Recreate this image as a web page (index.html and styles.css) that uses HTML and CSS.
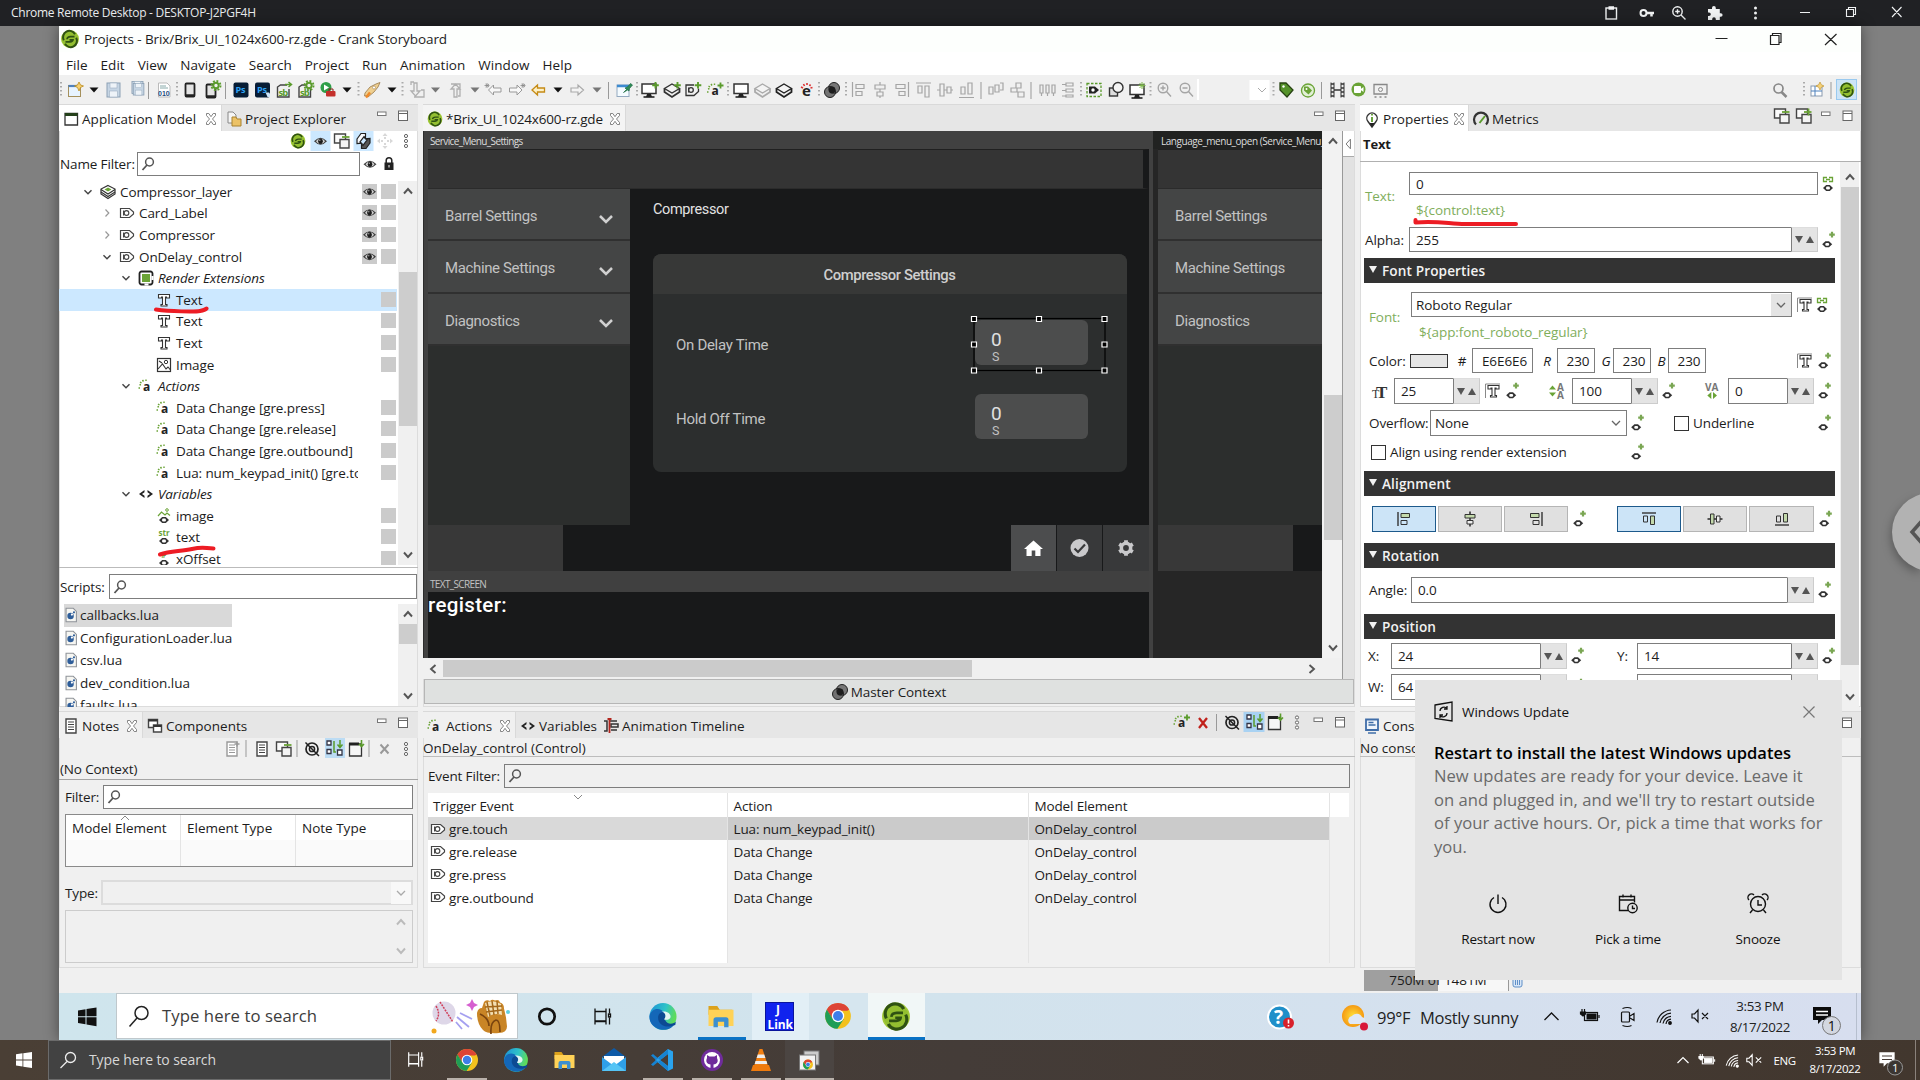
FILE: index.html
```html
<!DOCTYPE html>
<html lang="en">
<head>
<meta charset="utf-8">
<title>Chrome Remote Desktop - DESKTOP-J2PGF4H</title>
<link rel="stylesheet" href="styles.css">
</head>
<body>
<!-- Icon sprite: every glyph is centred on 0,0 -->
<svg class="sprite" aria-hidden="true">
<defs>
<linearGradient id="edgeg" x1="0" y1="0" x2="1" y2="0.3"><stop offset="0" stop-color="#1c8fd8"/><stop offset=".6" stop-color="#2fc3c8"/><stop offset="1" stop-color="#5fdc5a"/></linearGradient>
<radialGradient id="sung"><stop offset="0" stop-color="#ffe03a"/><stop offset="1" stop-color="#f59a13"/></radialGradient>
<g id="crank"><circle r="9" fill="#a3c93a"/><circle r="8" fill="#93bf30"/><g fill="none" stroke="#2f5212"><path d="M5-4.800A6.300 6.300 0 0 0-6.200 1.200" stroke-width="2"/><path d="M-5 4.800A6.300 6.300 0 0 0 6.200-1.200" stroke-width="2"/><path d="M4.500-2.300H.5Q-2.800-2.200-3 .2" stroke-width="1.700"/><path d="M-4.500 2.800H0Q2.800 2.500 3 .8H-.5" stroke-width="1.700"/></g></g>
<g id="x"><path d="M-4.500-5.500h2.300L0-2.300 2.200-5.500h2.300v2L1.500 0l3 3.500v2H2.200L0 2.300-2.200 5.500h-2.300v-2L-1.500 0l-3-3.500z" fill="#fff" stroke="#777" stroke-width=".9"/></g>
<g id="min"><rect x="-4" y="-2" width="8.500" height="3.500" fill="#fff" stroke="#777"/></g>
<g id="max"><rect x="-4.500" y="-5" width="9" height="9.500" fill="#fff" stroke="#666"/><path d="M-4.500-2.500h9" stroke="#666"/></g>
<g id="eye"><path d="M-6.500.3Q0-7 6.500.3 0 7-6.500.3z" fill="#3d3d3d"/><path d="M-4.500.3Q-3.500-1.500-1.500-2.300-3 .5-1.500 2.700-3.500 2-4.500.3zM4.500.3Q3.500-1.500 1.500-2.300 3 .5 1.500 2.700 3.500 2 4.500.3z" fill="#cfcfcf"/><circle cy=".2" r="2.200" fill="#1c1c1c"/><circle cx="-.7" cy="-.7" r=".7" fill="#aaa"/></g>
<g id="boxes"><path d="M-7.500-7H3.500v9h-11z" fill="#fbfbfb" stroke="#444" stroke-width="1.400"/><path d="M-2-1.500h9v8.500h-9z" fill="#f4f4f4" stroke="#444" stroke-width="1.400"/><path d="M0-4h7.500" stroke="#6aa336" stroke-width="1.800"/></g>
<g id="boxplus"><use href="#boxes"/><path d="M4.500-7.500v7" stroke="#6aa336" stroke-width="1.800"/></g>
<g id="swap"><path d="M-6.500-2L-2.500-7.500H2v4.500L.5-4.300-3.500 1l1.500 1.200-4.500.3z" fill="#f8fbff" stroke="#222" stroke-width="1.200"/><path d="M6.500 2L2.500 7.500H-2V3l1.500 1.300L3.500-1 2-2.200l4.500-.3z" fill="#555" stroke="#222" stroke-width="1.200"/></g>
<g id="move"><path d="M0-8l2.500 3h-5zM0 8l2.500-3h-5zM-8 0l3-2.500v5zM8 0L5-2.500v5zM-1-4h2v2h-2zM-1 2h2v2h-2zM-4-1h2v2h-2zM2-1h2v2H2z" fill="#d8d8d8"/></g>
<g id="dots"><g fill="#fff" stroke="#666"><circle cy="-5" r="1.600"/><circle r="1.600"/><circle cy="5" r="1.600"/></g></g>
<g id="lock"><rect x="-4.500" y="-1.500" width="9" height="7.500" fill="#222"/><path d="M-2.800-1v-2.500a2.800 2.800 0 0 1 5.600 0V-1" fill="none" stroke="#222" stroke-width="1.500"/><path d="M0 1v2.500" stroke="#fff"/></g>
<g id="find"><circle cx="1.500" cy="-2" r="3.900" fill="none" stroke="#555" stroke-width="1.500"/><path d="M-1 1L-5.500 6" stroke="#555" stroke-width="1.800"/></g>
<g id="open"><path d="M-3.500-1.800L0 1.800 3.500-1.800" fill="none" stroke="#444" stroke-width="1.400"/></g>
<g id="shut"><path d="M-1.500-3.500L1.800 0-1.500 3.500" fill="none" stroke="#999" stroke-width="1.200"/></g>
<g id="arrup"><path d="M-4 2.500L0-2 4 2.500" fill="none" stroke="currentColor" stroke-width="1.900"/></g>
<g id="arrdn"><path d="M-4-2.500L0 2 4-2.500" fill="none" stroke="currentColor" stroke-width="1.900"/></g>
<g id="arrl"><path d="M2.500-4L-2 0 2.500 4" fill="none" stroke="currentColor" stroke-width="1.900"/></g>
<g id="arrr"><path d="M-2.500-4L2 0-2.500 4" fill="none" stroke="currentColor" stroke-width="1.900"/></g>
<g id="layerg"><path d="M0-6.500l7 3.500v5L0 6.500-7 2v-5z" fill="#fff" stroke="#333" stroke-width="1.200"/><path d="M-7-2.500L0 2 7-2.500M-7 0l7 4.500L7 0" fill="none" stroke="#333" stroke-width="1.100"/><path d="M0-4.500l3.500 2L0-.5l-3.500-2z" fill="#6aa336"/></g>
<g id="layer"><path d="M0-6l7.500 4.500L0 3-7.500-1.500z" fill="#f4f4f4" stroke="currentColor" stroke-width="1.400"/><path d="M-7.500-1v3L0 7l7.500-5v-3" fill="none" stroke="currentColor" stroke-width="1.800"/></g>
<g id="ctl"><path d="M-6.500-4.500H2.500L6.500-1V1L2.500 4.500h-9z" fill="#fff" stroke="#444" stroke-width="1.200"/><circle cx="-.5" r="2.300" fill="none" stroke="#444" stroke-width="1.200"/><path d="M-3.500-2.500v5" stroke="#444"/></g>
<g id="render"><rect x="-6.500" y="-6.500" width="13" height="13" rx="2" fill="#fff" stroke="#222" stroke-width="1.800"/><path d="M-1.500 6.500h4M6.500-2v4" stroke="#fff" stroke-width="2.200"/><rect x="-4" y="-4" width="8" height="8" fill="#6aa336"/></g>
<g id="tee"><path d="M-5.500-5.500h11v3.500h-3v-1H1.500v7.500H3v1.500h-6V4.500h1.500V-3h-1v1h-3z" fill="#fff" stroke="#333" stroke-width="1.100"/></g>
<g id="tee2"><path d="M-7.500 7v-14H7" fill="none" stroke="#888"/><use href="#tee" x=".5"/></g>
<g id="img"><rect x="-6.500" y="-6.500" width="13" height="13" fill="#fff" stroke="#333" stroke-width="1.200"/><path d="M-6 4l4.500-5L2 4l2-2 2.500 3M-5-4l3 2" fill="none" stroke="#333" stroke-width="1.100"/><circle cx="2" cy="-3" r="1.700" fill="none" stroke="#333"/></g>
<g id="act"><text x="-3" y="5" class="ga">a</text><path d="M-6.500-1l1.500-.5M-6-4l1.500 1M-3.500-6l1 1.500M0-6.500v1.500M-7.500 2h1.500" stroke="#6aa336" stroke-width="1.400"/></g>
<g id="actp"><use href="#act"/><path d="M6-7.500v6M3-4.500h6" stroke="#5a9b2c" stroke-width="1.800"/></g>
<g id="var"><path d="M-1.500-4L-7 0l5.500 4V1.800L-4 0l2.500-1.800zM1.500-4L7 0 1.500 4V1.800L4 0 1.500-1.800z" fill="#222"/></g>
<g id="sv"><path d="M-1.800-3H1.800L5 0 1.800 3h-3.600L-5 0z" fill="#333"/><rect x="-1.900" y="-1.400" width="3.800" height="2.800" rx="1.200" fill="#fff"/></g>
<g id="vimg"><use href="#sv" y="4"/><path d="M-6 0l3.500-4L1-1l2-2 3 2.500" fill="none" stroke="#6aa336" stroke-width="1.200"/><circle cx="3" cy="-6" r="1.300" fill="none" stroke="#6aa336"/></g>
<g id="vstr"><use href="#sv" y="4"/><text x="-5.500" y="-1.500" class="gstr">str</text></g>
<g id="vnum"><use href="#sv" y="4"/><text x="-3" y="-1" class="gstr">#</text></g>
<g id="vp"><use href="#sv" x="-.8" y="4.300"/><path d="M4-8.200v5.600M1.200-5.400h5.600" stroke="#7aa653" stroke-width="2.200"/></g>
<g id="vl"><use href="#sv" y="4"/><path d="M-1-6.500h-3.500v4H-1M1-6.500h3.500v4H1M-2-4.500h4" fill="none" stroke="#6aa336" stroke-width="1.300"/></g>
<g id="lua"><path d="M-5.500-7.500h8L6-4v11.500H-5.500z" fill="#f6f6f2" stroke="#8f9399" stroke-width="1.200"/><circle cx="-.5" cy="1" r="3.600" fill="#2f5e9a"/><circle cx="1" cy="-.5" r="1.200" fill="#fff"/><circle cx="3.300" cy="-3" r="1.200" fill="#2f5e9a"/></g>
<g id="note"><path d="M-5-7H5V7H-5z" fill="#fff" stroke="currentColor" stroke-width="1.400"/><path d="M-3-4h6M-3-1.500h6M-3 1h6M-3 3.500h6" stroke="currentColor"/></g>
<g id="comp"><path d="M-6.500-6.500h9v8h-9z" fill="#fff" stroke="#444" stroke-width="1.400"/><path d="M-6.500-5.500h9" stroke="#333" stroke-width="2"/><path d="M-1.500-1h8v7h-8z" fill="#fff" stroke="#444" stroke-width="1.400"/><path d="M-1.500 0h8" stroke="#333" stroke-width="2"/></g>
<g id="noeye"><circle r="6" fill="none" stroke="#222" stroke-width="1.700"/><circle r="2.600" fill="none" stroke="#222" stroke-width="1.500"/><path d="M-6.500-6.500L7 7" stroke="#222" stroke-width="1.500" fill="none"/></g>
<g id="flow"><path d="M-7-7h4v4h-4zM-7 1.500h4v4h-4zM3.500 2h4.500v5H3.500z" fill="#fff" stroke="#334" stroke-width="1.300"/><path d="M0-7v11h2M6-8v7M3.500-3.500L6-.5l2.500-3" fill="none" stroke="#5a9b2c" stroke-width="1.500"/></g>
<g id="winp"><path d="M-6.500-5h12v12h-12z" fill="#f6f6f6" stroke="#333" stroke-width="1.300"/><path d="M-7-5H3" stroke="#222" stroke-width="3"/><path d="M5.500-9v6M3-5L5.500-2.500 8-5" fill="none" stroke="#5a9b2c" stroke-width="1.600"/></g>
<g id="mon"><path d="M-7-6H7V3.500H-7z" fill="#fff" stroke="#333" stroke-width="1.500"/><path d="M-2 4h4l1 3h-6z" fill="#222"/><path d="M-5.500 7h11" stroke="#222" stroke-width="1.600"/></g>
<g id="plus"><path d="M5.500-9v6.500M2.200-5.700h6.600" stroke="#5a9b2c" stroke-width="1.900"/></g>
<g id="ctx"><circle cx="2" cy="-2" r="5.500" fill="#777" stroke="#222"/><circle cx="-2" cy="2" r="5.500" fill="#555" fill-opacity=".8" stroke="#222"/><circle r="3.400" fill="#1d1d1d"/></g>
<g id="hl"><path d="M0-7V9" stroke="#aaa" stroke-width="2" stroke-dasharray="1.500 2.500"/></g>
<g id="sp"><path d="M0-8V9" stroke="#999" stroke-width="1"/></g>
<g id="car"><path d="M-4.500-2.500h9L0 2.500z" fill="currentColor"/></g>
<g id="al"><path d="M-6-7V7" stroke="currentColor" stroke-width="1.400"/><path d="M-3-5.500h8.500v4H-3z" fill="#c3d9ab" stroke="currentColor"/><path d="M-3 1.500h6v4h-6z" fill="none" stroke="currentColor"/></g>
<g id="ac"><path d="M0-7.500V7.500" stroke="currentColor" stroke-width="1.600"/><path d="M-5-4.500H5v3.500H-5z" fill="#c3d9ab" stroke="currentColor"/><path d="M-3 1.500h6v3.500h-6z" fill="#eee" stroke="currentColor"/></g>
<g id="fld"><path d="M-10-8h7l2 3H9v4H-10z" fill="#dca21c"/><path d="M-10-5H10V8H-10z" fill="#ffd257"/><path d="M-6 9V3q0-2 2-2h8q2 0 2 2v6H2.500V4.500h-5V9z" fill="#3c8fd0"/></g>
<g id="chr"><circle r="11" fill="#f3c11d"/><path d="M-9.530-5.500A11 11 0 0 0-.5 11L4.800 2.800 0 0-4.800 2.800z" fill="#1f9d56"/><path d="M-9.530-5.500L-4.500 3.500 0-3z" fill="#1f9d56"/><path d="M-9.530-5.500A11 11 0 0 1 9.530-5.500L8-4.500H0L-5 1.500z" fill="#dd4436"/><circle r="5.300" fill="#fff"/><circle r="4.200" fill="#3d7ee8"/></g>
<g id="edge"><circle r="11" fill="url(#edgeg)"/><path d="M-11 0C-10-7-2-8 1-3 3 0 0 2 1 4c2 3 7 3 9 1C7 11 0 12-5 9.500-9.500 7-11 4-11 0z" fill="#1467b8"/><path d="M-4 1c0-4 4-6 6-3 1 2-1 3 0 5.500C4 7 9 6 10.500 4L10 7 6 8C1 9-4 6-4 1z" fill="#0c4a93"/><path d="M.8 2.200C3 0 2-3-1-4c6-1 9 4 6 6-1 .8-3 1-4.200.2z" fill="#e3f5f3"/></g>
<g id="tv" fill="none" stroke="currentColor" stroke-width="1.300"><path d="M-7-8v3H4v-3M-7 8V5H4v3M-7-4.500V4.500H4V-4.500M7.500-8V-3M7.500 1v7"/><rect x="6.500" y="-2.500" width="2" height="3"/></g>
<g id="bat" fill="none" stroke="currentColor"><rect x="-5.500" y="-3.500" width="13" height="8" stroke-width="1.200"/><rect x="-3" y="-2" width="9" height="5" fill="currentColor"/><path d="M9-1v3M-8-7v3M-5.500-7v3M-9.500-4h5v2l-2.500 2-2.500-2z" fill="currentColor" stroke-width="1.200"/></g>
<g id="wifi" fill="none" stroke="currentColor" stroke-width="1.200"><path d="M-8 5.500A15 15 0 0 1 6-7M-5 6A12 12 0 0 1 6-3.800M-2 6.500A8.500 8.500 0 0 1 6-.7M1 7A5.500 5.500 0 0 1 6 2.200"/><circle cx="5" cy="6" r="1.300" fill="currentColor"/></g>
<g id="mute" fill="none" stroke="currentColor" stroke-width="1.200"><path d="M-8-2h2.500L-2-6V6L-5.500 2H-8zM2-3l6 6M8-3L2 3"/></g>
<g id="note1"><path d="M-9-8H9V5H0L-4 9V5h-5z" fill="currentColor"/></g>
</defs>
</svg>

<header class="crd-bar">
  <span>Chrome Remote Desktop - DESKTOP-J2PGF4H</span>
  <svg width="330" height="26" viewBox="1590 0 330 26" fill="none" stroke="#f1f3f4" stroke-width="1.400">
    <rect x="1606" y="8" width="10.500" height="11"/><path d="M1608.500 8h5.500" stroke-width="3.500"/>
    <circle cx="1643.500" cy="13" r="3" stroke-width="2"/><path d="M1646 13h8M1651.500 13v3.500" stroke-width="2.500"/>
    <circle cx="1677.500" cy="11.500" r="4.700"/><path d="M1681 15l4.500 4.500M1675.200 11.500h4.600M1677.500 9.200v4.600"/>
    <path d="M1708 9h4v-1a1.900 1.900 0 0 1 3.800 0v1h4v4.200h1a1.800 1.800 0 0 1 0 3.600h-1V20h-4v-1a1.800 1.800 0 0 0-3.600 0v1h-4.200v-4h1a1.800 1.800 0 0 0 0-3.600h-1z" fill="#f1f3f4" stroke="none"/>
    <g fill="#f1f3f4" stroke="none"><circle cx="1755.500" cy="8" r="1.500"/><circle cx="1755.500" cy="13" r="1.500"/><circle cx="1755.500" cy="18" r="1.500"/></g>
    <path d="M1800 12.500h10" stroke-width="1"/><path d="M1846.500 9.500h7v7h-7zM1848.500 9.500v-2h7v7h-2M1892 7l9.500 10M1901.500 7l-9.500 10" stroke-width="1.100"/>
  </svg>
</header>

<main class="remote">
<div class="win">
  <div class="title">
    <svg class="ic" viewBox="-10 -10 20 20"><use href="#crank"/></svg>
    <span>Projects - Brix/Brix_UI_1024x600-rz.gde - Crank Storyboard</span>
    <svg width="141" height="26" viewBox="1710 26 141 26" fill="none" stroke="#222" stroke-width="1.200"><path d="M1715.500 38.500h12M1770.500 35.500h8.500v9h-8.500zM1772.500 35.500v-2h8.500v9h-2M1825 34l11.500 11M1836.500 34l-11.500 11"/></svg>
  </div>
  <nav class="menu"><span>File</span><span>Edit</span><span>View</span><span>Navigate</span><span>Search</span><span>Project</span><span>Run</span><span>Animation</span><span>Window</span><span>Help</span></nav>
  <div class="toolbar">
  <svg width="1802" height="28" viewBox="59 75 1802 28">
    <use href="#hl" x="61" y="89"/>
    <g transform="translate(75 90)"><rect x="-6.500" y="-4.500" width="12" height="11" fill="#e7f3ff" stroke="#a5905c"/><path d="M-6.500-4H4.500" stroke="#4f81bd" stroke-width="2.200"/><path d="M4-8l1.500 3 3 1-3 1.500L4 1 2.500-2.500l-3-1.500 3-1z" fill="#f7d070" stroke="#b98a1c" stroke-width=".8"/></g>
    <use href="#car" x="94" y="90"/>
    <g id="disk" transform="translate(113.500 90)"><rect x="-6.500" y="-7" width="13" height="14" fill="#c6d5e4" stroke="#8ca0b4"/><rect x="-3.500" y="-7" width="7" height="5" fill="#eef3f8" stroke="#9db0c2" stroke-width=".6"/><rect x="-4" y="1" width="8" height="6" fill="#eef3f8" stroke="#9db0c2" stroke-width=".6"/></g>
    <use href="#disk" transform="translate(41 11) scale(.85)"/><use href="#disk" transform="translate(45.500 15.500) scale(.82)"/>
    <use href="#sp" x="148.500" y="90"/>
    <g transform="translate(164 90)"><path d="M-5.500-7H3l3 3V7h-11.500z" fill="#fff" stroke="#bbb"/><path d="M-4-4h6M-4-2h8" stroke="#8aa"/><text class="g010" x="-6" y="6">010</text></g>
    <use href="#hl" x="177" y="89"/>
    <g id="phone" transform="translate(190 90)"><rect x="-4.500" y="-6.500" width="9" height="13" rx="1" fill="#e4e4e4" stroke="#222" stroke-width="1.800"/><path d="M-4 5.500h8" stroke="#222" stroke-width="2.500"/></g>
    <use href="#phone" x="21" y="1"/><g id="ggear"><circle cx="216" cy="85.500" r="4.600" fill="none" stroke="#5a9b2c" stroke-width="1.800" stroke-dasharray="1.900 1.700"/><circle cx="216" cy="85.500" r="2.700" fill="#f0f0f0" stroke="#5a9b2c" stroke-width="2"/></g>
    <use href="#sp" x="225.500" y="90"/>
    <g id="ps"><rect x="233.500" y="82.500" width="15" height="15" rx="2" fill="#071d35"/><text class="gps" x="235.500" y="93">Ps</text></g>
    <use href="#ps" x="21.500"/><path d="M265.500 92.500h3.500l1 1v3.500h-2.500z" fill="#cfe6fa"/>
    <g id="sb"><path d="M287 85h-6.500l-3 2v10h11.500v-8" fill="none" stroke="#444" stroke-width="1.400"/><text class="gsb" x="278.500" y="95.500">sb</text></g>
    <path d="M285 84.500h6M288.500 82l3 2.500-3 2.500" stroke="#5a9b2c" stroke-width="1.500" fill="none"/>
    <use href="#sb" x="21.500"/><use href="#ggear" x="93"/>
    <circle cx="326" cy="87.500" r="5.500" fill="#2f9e48"/><path d="M324 84.500l5 3-5 3z" fill="#fff"/><rect x="326" y="91" width="9.500" height="5.500" rx="1" fill="#c4302b"/><path d="M329 91v-2h4v2" fill="none" stroke="#8a1f1b"/>
    <use href="#car" x="347" y="90"/><use href="#hl" x="358.500" y="89"/>
    <path d="M365 93l5-6 6-3 4-1.500-2 4.500-4 5-6 5-1.500-1.500-2 .5z" fill="#efcf8f" stroke="#a08358" stroke-width=".9"/><path d="M366 97.500l4-5" stroke="#f08a2a" stroke-width="2.500"/><circle cx="374" cy="87.500" r="1.500" fill="#fff" stroke="#a08358" stroke-width=".6"/>
    <use href="#car" x="392" y="90"/><use href="#hl" x="402.500" y="89"/>
    <g fill="none" stroke="#b0b0b0" stroke-width="1.300"><path d="M414 83v8h-3l4.500 5 4.500-5h-3v-8zM421 90h3v7h-10M411 85v-3h3"/><path d="M451 84h9v12h-2M454 97v-8h-3l4.500-5 4.500 5h-3v8z"/></g>
    <g color="#777"><use href="#car" x="435.500" y="90"/><use href="#car" x="475" y="90"/><use href="#car" x="597" y="90"/></g>
    <path d="M488.500 90l5-5v3h7.500v4h-7.500v3z" fill="#f8f8f8" stroke="#999"/><path d="M487 83v5M484.500 85.500h5M485.500 84l3.500 3M489 84l-3.500 3" stroke="#888" stroke-width=".8"/>
    <path d="M522 90l-5-5v3h-7.500v4h7.500v3z" fill="#f8f8f8" stroke="#999"/><path d="M523 83v5M520.500 85.500h5M521.500 84l3.500 3M525 84l-3.500 3" stroke="#888" stroke-width=".8"/>
    <path d="M532 90l5.500-5v3h7v4h-7v3z" fill="#fdf0c6" stroke="#c58b16" stroke-width="1.300"/>
    <use href="#car" x="558" y="90"/>
    <path d="M583.500 90l-5.500-5v3h-7v4h7v3z" fill="#f4f4f4" stroke="#aaa" stroke-width="1.200"/>
    <use href="#sp" x="608.500" y="90"/>
    <rect x="617" y="85" width="12" height="11.500" fill="#f4fbff" stroke="#93a9c0"/><path d="M617 86h12" stroke="#3d8bd0" stroke-width="2.500"/><path d="M623.500 92.500l3-3-1.500-1.500 2.500-1 3-3.500 2 1.500-3 3.500-.5 2.500-1.500-1z" fill="#2e8b57" stroke="#1c6b40" stroke-width=".7"/>
    <use href="#hl" x="637" y="89"/>
    <use href="#mon" x="649" y="90"/><use href="#plus" x="650" y="91"/>
    <g color="#333"><use href="#layer" x="672" y="90"/><use href="#plus" x="672" y="91"/></g>
    <path d="M694 85h-8v10.500h8l4.500-4v-3" fill="none" stroke="#333" stroke-width="1.300"/><circle cx="691" cy="90" r="2.300" fill="none" stroke="#333" stroke-width="1.300"/><path d="M688.500 87.500v5" stroke="#333"/><use href="#plus" x="692.500" y="91"/>
    <use href="#actp" x="714.500" y="90"/><use href="#hl" x="728" y="89"/>
    <use href="#mon" x="741" y="90"/>
    <g color="#aaa"><use href="#layer" x="762.500" y="90"/></g><g color="#222"><use href="#layer" x="784" y="90"/></g>
    <text class="ge" x="802" y="96">e</text><path d="M801 87l2 1M803.500 84l1 2M807 83v2M810.500 84.500l-1 1.500M812.500 87.500l-2 .5" stroke="#d33" stroke-width="1.600"/>
    <use href="#hl" x="819" y="89"/><use href="#ctx" x="832" y="90"/><use href="#hl" x="846" y="89"/>
    <g fill="none" stroke="#a5a5a5" stroke-width="1.200">
      <path d="M852.500 82v15M856 84.500h8v4h-8zM856 91.500h6v4h-6z"/>
      <path d="M880 82v3M880 89v3M880 96v2M875 85h10v4h-10zM877 92h6v4h-6z"/>
      <path d="M908.500 82v15M896 84.500h9v4h-9zM899 91.500h6v4h-6z"/>
      <path d="M916 83h15M918 86h4v7h-4zM925 86h4v11h-4z"/>
      <path d="M937 90h3M944 90h3M951 90h2M940 84h4v12h-4zM947 87h4v6h-4z"/>
      <path d="M959 97.500h15M961 87h4v7h-4zM968 83h4v11h-4z"/>
      <path d="M989 87h4v7h-4zM995 85h4v7h-4zM1000 83h3v7h-3"/>
      <path d="M1011 88h6v4h-6zM1016 83h5v5h-5zM1018 92h6v5h-6z"/>
      <path d="M1040 85h3v8h-3zM1046 85h3v8h-3zM1052 85h3v8h-3zM1041.500 93v3M1047.500 93v3M1053.500 93v3"/>
      <path d="M1066 83h7v3h-7zM1066 89h7v3h-7zM1066 95h7v2h-7zM1062 84.500h4M1062 90.500h4M1062 96h4"/>
    </g>
    <use href="#sp" x="981" y="90"/><use href="#sp" x="1031" y="90"/><use href="#hl" x="1081" y="89"/>
    <rect x="1087" y="83.500" width="14" height="13" fill="none" stroke="#5a9b2c" stroke-width="1.300" stroke-dasharray="2.500 1.500"/><path d="M1089 86.500h6l4 3.500-4 3.500h-6z" fill="#222"/><circle cx="1093" cy="90" r="1.700" fill="#fff"/>
    <rect x="1109.500" y="88" width="8" height="8" fill="#ddd" stroke="#333" stroke-width="1.400"/><circle cx="1118" cy="87.500" r="5" fill="#f4f4f4" stroke="#333" stroke-width="1.400"/>
    <use href="#mon" x="1137" y="91"/><path d="M1142 82v7M1138.500 85.500h7M1139.500 83l5 5M1144.500 83l-5 5" stroke="#7bb648" stroke-width="1"/>
    <use href="#hl" x="1150.500" y="89"/>
    <g fill="none" stroke="#a5a5a5" stroke-width="1.400"><circle cx="1163" cy="88" r="4.800"/><path d="M1166.500 91.500l4.500 5M1160.500 88h5M1163 85.500v5"/><circle cx="1185" cy="88" r="4.800"/><path d="M1188.500 91.500l4.500 5M1182.500 88h5"/></g>
    <path d="M1198 79v21" stroke="#fff" stroke-width="2"/>
    <rect x="1249.500" y="80" width="20" height="20" fill="#fff"/><path d="M1258 88l4 4 4-4" fill="none" stroke="#aaa"/>
    <use href="#hl" x="1273.500" y="89"/>
    <path d="M1280 83h6l7 7-6 7-7-7z" fill="#55922a" stroke="#274212" stroke-width="1.300"/><circle cx="1283.500" cy="86.500" r="1.200" fill="#fff"/>
    <circle cx="1308" cy="90.500" r="6.500" fill="#e2f0d6" stroke="#6aa336" stroke-width="1.300"/><path d="M1304 86.500h4l4 4-3.500 4-4.500-4z" fill="#6aa336"/><circle cx="1306.500" cy="89" r="1" fill="#fff"/>
    <use href="#sp" x="1321.500" y="90"/>
    <path d="M1331 82.500v15M1334 82.500v15M1341 82.500v15M1344 82.500v15" stroke="#333" stroke-width="1" fill="none"/><path d="M1334 90h7M1331 84h3M1331 88h3M1331 92h3M1331 96h3M1341 84h3M1341 88h3M1341 92h3M1341 96h3" stroke="#333" stroke-width="1.500" fill="none"/>
    <circle cx="1358.500" cy="89.500" r="7" fill="#6aa336"/><rect x="1354" y="86" width="7" height="7" rx="1" fill="#fff"/><path d="M1360 89.500l3.500-2.500v5z" fill="#fff"/>
    <path d="M1374 94v-9.500h13V94zM1374.500 97h2M1379.500 97h2M1384.500 97h2" fill="none" stroke="#888" stroke-width="1.300"/><circle cx="1380.500" cy="89.500" r="2" fill="none" stroke="#888"/>
    <circle cx="1778.500" cy="88.500" r="4.500" fill="none" stroke="#888" stroke-width="1.700"/><path d="M1781.500 92l5 5" stroke="#888" stroke-width="2.500"/>
    <use href="#hl" x="1804" y="89"/>
    <rect x="1811" y="86" width="11" height="10" fill="#fff" stroke="#8a9aae"/><path d="M1811 91h11M1815 86v10" stroke="#4f81bd"/><path d="M1820 82l1.300 2.700 2.700 1.300-2.700 1.300-1.300 2.700-1.300-2.700-2.700-1.300 2.700-1.300z" fill="#f6d27a" stroke="#b98a1c" stroke-width=".6"/>
    <use href="#sp" x="1831" y="90"/>
    <rect x="1836.500" y="79.500" width="20" height="20" fill="#cce4f7" stroke="#99c9ef"/><use href="#crank" transform="translate(1847 90) scale(.82)"/>
  </svg>
  </div>

  <div class="bench">
    <!-- Application model -->
    <section class="panel model">
      <div class="tabs">
        <div class="tab on w-app"><svg class="ic" viewBox="-10 -10 20 20"><path d="M-6-5.500H6.500V6H-6z" fill="#fff" stroke="#333" stroke-width="1.300"/><path d="M-6-4.500H6.500" stroke="#24401a" stroke-width="3"/></svg><span>Application Model</span><svg class="ic" viewBox="-10 -10 20 20"><use href="#x"/></svg></div>
        <div class="tab"><svg class="ic" viewBox="-10 -10 20 20"><path d="M-6-7h5l3 3v8h-8z" fill="#f5f5f5" stroke="#888"/><path d="M-2-2h4l1 2h4v7h-9z" fill="#ecc266" stroke="#a8822f"/></svg><span>Project Explorer</span></div>
        <svg class="pbtn" width="50" height="20" viewBox="-12 -12 50 20"><use href="#min" x="-.5" y="-2"/><use href="#max" x="21"/></svg>
      </div>
      <div class="strip">
        <svg width="124" height="20" viewBox="288 131 124 20"><use href="#crank" transform="translate(298 141) scale(.82)"/><path d="M310.500 131h20v20h-20zM353.500 131h20v20h-20z" fill="#cce8ff"/><use href="#eye" x="320.500" y="141"/><use href="#boxes" x="342" y="141"/><use href="#swap" x="363.500" y="141"/><use href="#move" x="385" y="141"/><use href="#dots" x="406" y="141"/></svg>
      </div>
      <div class="filter"><label>Name Filter:</label><div class="inp"><svg class="ic" viewBox="-10 -10 20 20"><use href="#find"/></svg></div><svg class="ic" viewBox="-10 -10 20 20"><use href="#eye"/></svg><svg class="ic lk" viewBox="-10 -10 20 20"><use href="#lock"/></svg></div>
      <div class="treewrap">
        <ul class="tree">
          <li><div class="nm l0"><svg class="ic" viewBox="-10 -10 20 20"><use href="#open"/></svg><svg class="ic" viewBox="-10 -10 20 20"><use href="#layerg"/></svg><span>Compressor_layer</span></div><b><svg viewBox="-7.500 -7.500 15 15"><use href="#eye"/></svg></b><b></b></li>
          <li><div class="nm l1"><svg class="ic" viewBox="-10 -10 20 20"><use href="#shut"/></svg><svg class="ic" viewBox="-10 -10 20 20"><use href="#ctl"/></svg><span>Card_Label</span></div><b><svg viewBox="-7.500 -7.500 15 15"><use href="#eye"/></svg></b><b></b></li>
          <li><div class="nm l1"><svg class="ic" viewBox="-10 -10 20 20"><use href="#shut"/></svg><svg class="ic" viewBox="-10 -10 20 20"><use href="#ctl"/></svg><span>Compressor</span></div><b><svg viewBox="-7.500 -7.500 15 15"><use href="#eye"/></svg></b><b></b></li>
          <li><div class="nm l1"><svg class="ic" viewBox="-10 -10 20 20"><use href="#open"/></svg><svg class="ic" viewBox="-10 -10 20 20"><use href="#ctl"/></svg><span>OnDelay_control</span></div><b><svg viewBox="-7.500 -7.500 15 15"><use href="#eye"/></svg></b><b></b></li>
          <li><div class="nm l2"><svg class="ic" viewBox="-10 -10 20 20"><use href="#open"/></svg><svg class="ic" viewBox="-10 -10 20 20"><use href="#render"/></svg><em>Render Extensions</em></div></li>
          <li class="sel"><div class="nm l3"><svg class="ic" viewBox="-10 -10 20 20"><use href="#tee"/></svg><span>Text</span></div><b></b></li>
          <li><div class="nm l3"><svg class="ic" viewBox="-10 -10 20 20"><use href="#tee"/></svg><span>Text</span></div><b></b></li>
          <li><div class="nm l3"><svg class="ic" viewBox="-10 -10 20 20"><use href="#tee"/></svg><span>Text</span></div><b></b></li>
          <li><div class="nm l3"><svg class="ic" viewBox="-10 -10 20 20"><use href="#img"/></svg><span>Image</span></div><b></b></li>
          <li><div class="nm l2"><svg class="ic" viewBox="-10 -10 20 20"><use href="#open"/></svg><svg class="ic" viewBox="-10 -10 20 20"><use href="#act"/></svg><em>Actions</em></div></li>
          <li><div class="nm l3"><svg class="ic" viewBox="-10 -10 20 20"><use href="#act"/></svg><span>Data Change [gre.press]</span></div><b></b></li>
          <li><div class="nm l3"><svg class="ic" viewBox="-10 -10 20 20"><use href="#act"/></svg><span>Data Change [gre.release]</span></div><b></b></li>
          <li><div class="nm l3"><svg class="ic" viewBox="-10 -10 20 20"><use href="#act"/></svg><span>Data Change [gre.outbound]</span></div><b></b></li>
          <li><div class="nm l3"><svg class="ic" viewBox="-10 -10 20 20"><use href="#act"/></svg><span>Lua: num_keypad_init() [gre.touch]</span></div><b></b></li>
          <li><div class="nm l2"><svg class="ic" viewBox="-10 -10 20 20"><use href="#open"/></svg><svg class="ic" viewBox="-10 -10 20 20"><use href="#var"/></svg><em>Variables</em></div></li>
          <li><div class="nm l3"><svg class="ic" viewBox="-10 -10 20 20"><use href="#vimg"/></svg><span>image</span></div><b></b></li>
          <li><div class="nm l3"><svg class="ic" viewBox="-10 -10 20 20"><use href="#vstr"/></svg><span>text</span></div><b></b></li>
          <li><div class="nm l3"><svg class="ic" viewBox="-10 -10 20 20"><use href="#vnum"/></svg><span>xOffset</span></div><b></b></li>
        </ul>
        <div class="vsb"><svg class="ic" viewBox="-10 -10 20 20"><use href="#arrup"/></svg><i class="th-tree"></i><svg class="ic" viewBox="-10 -10 20 20"><use href="#arrdn"/></svg></div>
      </div>
      <div class="scripts"><label>Scripts:</label><div class="inp"><svg class="ic" viewBox="-10 -10 20 20"><use href="#find"/></svg></div></div>
      <div class="filewrap">
        <ul class="files">
          <li class="sel"><svg class="ic" viewBox="-10 -10 20 20"><use href="#lua"/></svg>callbacks.lua</li>
          <li><svg class="ic" viewBox="-10 -10 20 20"><use href="#lua"/></svg>ConfigurationLoader.lua</li>
          <li><svg class="ic" viewBox="-10 -10 20 20"><use href="#lua"/></svg>csv.lua</li>
          <li><svg class="ic" viewBox="-10 -10 20 20"><use href="#lua"/></svg>dev_condition.lua</li>
          <li><svg class="ic" viewBox="-10 -10 20 20"><use href="#lua"/></svg>faults.lua</li>
        </ul>
        <div class="vsb"><svg class="ic" viewBox="-10 -10 20 20"><use href="#arrup"/></svg><i class="th-files"></i><svg class="ic" viewBox="-10 -10 20 20"><use href="#arrdn"/></svg></div>
      </div>
    </section>

    <!-- Editor -->
    <section class="panel editor">
      <div class="tabs">
        <div class="tab on w-gde"><svg class="ic" viewBox="-10 -10 20 20"><use href="#crank" transform="scale(.82)"/></svg><span>*Brix_UI_1024x600-rz.gde</span><svg class="ic" viewBox="-10 -10 20 20"><use href="#x"/></svg></div>
        <svg class="pbtn" width="50" height="20" viewBox="-12 -12 50 20"><use href="#min" x="-.5" y="-2"/><use href="#max" x="21"/></svg>
      </div>
      <div class="edrow">
        <div class="edmain">
          <div class="canvas">
            <div class="screen s1">
              <div class="slabel">Service_Menu_Settings</div>
              <div class="shead"></div>
              <div class="sbody">
                <div class="snav"><div>Barrel Settings<svg class="ic" viewBox="-10 -10 20 20"><path d="M-6-3L0 3 6-3"/></svg></div><div>Machine Settings<svg class="ic" viewBox="-10 -10 20 20"><path d="M-6-3L0 3 6-3"/></svg></div><div>Diagnostics<svg class="ic" viewBox="-10 -10 20 20"><path d="M-6-3L0 3 6-3"/></svg></div></div>
                <div class="spage">
                  <h3>Compressor</h3>
                  <div class="card">
                    <h4>Compressor Settings</h4>
                    <div class="setting"><span>On Delay Time</span><div class="val"><b>0</b><small>S</small></div></div>
                    <div class="setting"><span>Hold Off Time</span><div class="val"><b>0</b><small>S</small></div></div>
                  </div>
                </div>
              </div>
              <div class="sfoot"><i></i>
                <svg width="45" height="46" viewBox="-22.500 -23 45 46"><path d="M-9.500 1L0-7.500 9.500 1H7V8H1.800V2.500h-3.600V8H-7V1z" fill="#fff"/></svg>
                <svg width="45" height="46" viewBox="-22.500 -23 45 46"><circle r="9" fill="#c9c9cb"/><path d="M-5 .5L-1.500 4 5.500-3.500" fill="none" stroke="#38393a" stroke-width="2.200"/></svg>
                <svg width="46" height="46" viewBox="-23 -23 46 46"><circle r="4.700" fill="none" stroke="#c9c9cb" stroke-width="3.400"/><path d="M0-7.800v15.600M-6.800-3.900l13.600 7.800M-6.800 3.900l13.600-7.800" stroke="#c9c9cb" stroke-width="3.800"/><circle r="2.900" fill="#38393a"/></svg>
              </div>
              <div class="tlabel">TEXT_SCREEN</div>
              <div class="tbody">register:</div>
            </div>
            <div class="screen s2">
              <div class="slabel">Language_menu_open (Service_Menu_S</div>
              <div class="shead"></div>
              <div class="sbody"><div class="snav"><div>Barrel Settings</div><div>Machine Settings</div><div>Diagnostics</div></div></div>
              <div class="sfoot"><i></i></div>
            </div>
            <svg class="pick" width="140" height="60" viewBox="970 314 140 60"><rect x="974" y="318.500" width="131" height="52" fill="none" stroke="#000" stroke-width="1.200"/><g fill="#000" stroke="#fff" stroke-width="1.200"><path d="M971.500 316.500h5v5h-5zM1036.500 316.500h5v5h-5zM1102 316.500h5v5h-5zM971.500 342h5v5h-5zM1102 342h5v5h-5zM971.500 368h5v5h-5zM1036.500 368h5v5h-5zM1102 368h5v5h-5z"/></g></svg>
          </div>
          <div class="vsb vcan"><svg class="ic" viewBox="-10 -10 20 20"><use href="#arrup"/></svg><i class="th-can"></i><svg class="ic" viewBox="-10 -10 20 20"><use href="#arrdn"/></svg></div>
          <div class="hsb"><svg class="ic" viewBox="-10 -10 20 20"><use href="#arrl"/></svg><i></i><svg class="ic" viewBox="-10 -10 20 20"><use href="#arrr"/></svg></div>
        </div>
        <div class="palette"><svg width="11" height="26" viewBox="0 0 11 26"><path d="M7.500 8.500v10L3 13.500z" fill="#fff" stroke="#777"/></svg></div>
      </div>
      <div class="master"><svg class="ic" viewBox="-10 -10 20 20"><use href="#ctx"/></svg>Master Context</div>
    </section>

    <!-- Properties -->
    <section class="panel props">
      <div class="tabs">
        <div class="tab on w-prop"><svg class="ic" viewBox="-10 -10 20 20"><path d="M0 8L-4 2.500A5.200 5.200 0 1 1 4 2.500z" fill="#fff" stroke="#333" stroke-width="1.400"/><path d="M0-5v1.500M0-2v5" stroke="#5a9b2c" stroke-width="1.800"/><path d="M-2.500 4h5L0 8z" fill="#222"/></svg><span>Properties</span><svg class="ic" viewBox="-10 -10 20 20"><use href="#x"/></svg></div>
        <div class="tab"><svg class="ic" viewBox="-10 -10 20 20"><path d="M-5 5.500A7 7 0 1 1 5 5.500" fill="none" stroke="#333" stroke-width="2.200"/><path d="M-1.500 4L4-3" stroke="#5a9b2c" stroke-width="2"/></svg><span>Metrics</span></div>
        <svg class="pbtn" width="92" height="20" viewBox="-12 -12 92 20"><use href="#boxes" x="-1"/><use href="#boxplus" x="21"/><use href="#min" x="42.500" y="-2"/><use href="#max" x="64.500"/></svg>
      </div>
      <div class="ptitle">Text</div>
      <div class="pwrap">
        <div class="form">
          <div class="r r-text"><label class="g">Text:</label><div class="inp">0</div><svg class="ic" viewBox="-10 -10 20 20"><use href="#vl"/></svg><span class="g">${control:text}</span></div>
          <div class="r r-alpha"><label>Alpha:</label><div class="spin">255<i></i></div><svg class="ic" viewBox="-10 -10 20 20"><use href="#vp"/></svg></div>
          <h2 class="m6">Font Properties</h2>
          <div class="r r-font"><label class="g">Font:</label><div class="inp combo gray">Roboto Regular<svg width="20" height="22" viewBox="-10 -11 20 22"><path d="M-4-2L0 2 4-2"/></svg></div><svg class="ic" viewBox="-10 -10 20 20"><use href="#tee2"/></svg><svg class="ic" viewBox="-10 -10 20 20"><use href="#vl"/></svg><span class="g">${app:font_roboto_regular}</span></div>
          <div class="r r-color"><label>Color:</label><div class="swatch"></div><span>#</span><div class="inp c">E6E6E6</div><em>R</em><div class="inp c">230</div><em>G</em><div class="inp c">230</div><em>B</em><div class="inp c">230</div><svg class="ic" viewBox="-10 -10 20 20"><use href="#tee2"/></svg><svg class="ic" viewBox="-10 -10 20 20"><use href="#vp"/></svg></div>
          <div class="r r-size"><svg class="ic" viewBox="-10 -10 20 20"><text class="gtt" x="-4" y="6.500">T</text><text class="gtt2" x="-8" y="6.500">T</text></svg><div class="spin">25<i></i></div><svg class="ic" viewBox="-10 -10 20 20"><use href="#tee2"/></svg><svg class="ic" viewBox="-10 -10 20 20"><use href="#vp"/></svg><svg class="ic" viewBox="-10 -10 20 20"><path d="M-8-1.500h7L-4.500-5.500zM-8 1.500h7L-4.500 5.500z" fill="#6aa336"/><text class="gsm" x="0" y="-.5">A</text><text class="gsm" x="0" y="8">A</text></svg><div class="spin">100<i></i></div><svg class="ic" viewBox="-10 -10 20 20"><use href="#vp"/></svg><svg class="ic" viewBox="-10 -10 20 20"><text class="gsm" x="-7" y="0">VA</text><path d="M-.7 1v7L-4.700 4.500zM1 1v7L5 4.500z" fill="#6aa336"/></svg><div class="spin">0<i></i></div><svg class="ic" viewBox="-10 -10 20 20"><use href="#vp"/></svg></div>
          <div class="r r-over"><label>Overflow:</label><div class="inp combo">None<svg width="20" height="22" viewBox="-10 -11 20 22"><path d="M-4-2L0 2 4-2"/></svg></div><svg class="ic" viewBox="-10 -10 20 20"><use href="#vp"/></svg><i class="cb"></i><span>Underline</span><svg class="ic" viewBox="-10 -10 20 20"><use href="#vp"/></svg></div>
          <div class="r r-ext"><i class="cb"></i><span>Align using render extension</span><svg class="ic" viewBox="-10 -10 20 20"><use href="#vp"/></svg></div>
          <h2 class="m7">Alignment</h2>
          <div class="r r-align"><button class="on"><svg class="ic" viewBox="-10 -10 20 20"><use href="#al"/></svg></button><button><svg class="ic" viewBox="-10 -10 20 20"><use href="#ac"/></svg></button><button><svg class="ic" viewBox="-10 -10 20 20"><use href="#al" transform="scale(-1 1)"/></svg></button><svg class="ic" viewBox="-10 -10 20 20"><use href="#vp"/></svg><button class="on"><svg class="ic" viewBox="-10 -10 20 20"><use href="#al" transform="rotate(90)"/></svg></button><button><svg class="ic" viewBox="-10 -10 20 20"><use href="#ac" transform="rotate(-90)"/></svg></button><button><svg class="ic" viewBox="-10 -10 20 20"><use href="#al" transform="scale(-1 1) rotate(-90)"/></svg></button><svg class="ic" viewBox="-10 -10 20 20"><use href="#vp"/></svg></div>
          <h2 class="m11">Rotation</h2>
          <div class="r r-angle"><label>Angle:</label><div class="spin">0.0<i></i></div><svg class="ic" viewBox="-10 -10 20 20"><use href="#vp"/></svg></div>
          <h2 class="m11">Position</h2>
          <div class="r r-xy"><label>X:</label><div class="spin">24<i></i></div><svg class="ic" viewBox="-10 -10 20 20"><use href="#vp"/></svg><label>Y:</label><div class="spin">14<i></i></div><svg class="ic" viewBox="-10 -10 20 20"><use href="#vp"/></svg></div>
          <div class="r r-xy r-wh"><label>W:</label><div class="spin">64<i></i></div><svg class="ic" viewBox="-10 -10 20 20"><use href="#vp"/></svg><label>H:</label><div class="spin"><i></i></div></div>
        </div>
        <div class="vsb"><svg class="ic" viewBox="-10 -10 20 20"><use href="#arrup"/></svg><i class="th-prop"></i><svg class="ic" viewBox="-10 -10 20 20"><use href="#arrdn"/></svg></div>
      </div>
    </section>

    <!-- Notes -->
    <section class="panel low notes">
      <div class="tabs">
        <div class="tab on w-notes"><svg class="ic" viewBox="-10 -10 20 20" color="#444"><use href="#note"/></svg><span>Notes</span><svg class="ic" viewBox="-10 -10 20 20"><use href="#x"/></svg></div>
        <div class="tab"><svg class="ic" viewBox="-10 -10 20 20"><use href="#comp"/></svg><span>Components</span></div>
        <svg class="pbtn" width="50" height="20" viewBox="-12 -12 50 20"><use href="#min" x="-.5" y="-2"/><use href="#max" x="21"/></svg>
      </div>
      <div class="strip"><svg width="190" height="20" viewBox="222 738 190 20"><g color="#999"><use href="#note" x="232" y="749"/></g><path d="M237 741.500v5M234.500 744h5" stroke="#999" stroke-width="1.400"/><use href="#sp" x="246" y="748"/><g color="#444"><use href="#note" x="262" y="749"/></g><use href="#boxes" x="284" y="749"/><use href="#sp" x="297" y="748"/><use href="#noeye" x="312" y="749"/><rect x="325" y="738" width="20" height="20" fill="#bcdcf4"/><use href="#flow" x="334" y="748"/><use href="#winp" x="356" y="749"/><use href="#sp" x="369" y="748"/><path d="M380.500 744.500l8 9M388.500 744.500l-8 9" stroke="#999" stroke-width="2"/><use href="#dots" x="406" y="749"/></svg></div>
      <div class="ctxname">(No Context)</div>
      <div class="nfilter"><label>Filter:</label><div class="inp"><svg class="ic" viewBox="-10 -10 20 20"><use href="#find"/></svg></div></div>
      <div class="ntable"><div>Model Element<svg width="12" height="6" viewBox="0 0 12 6"><path d="M2 5L6 1l4 4" fill="none" stroke="#888"/></svg></div><div>Element Type</div><div>Note Type</div></div>
      <div class="ntype"><label>Type:</label><div class="dis"><svg width="20" height="22" viewBox="-10 -11 20 22"><path d="M-4-2L0 2 4-2" fill="none" stroke="#aaa" stroke-width="1.300"/></svg></div></div>
      <div class="narea"><svg class="ic" viewBox="-10 -10 20 20"><use href="#arrup"/></svg><svg class="ic" viewBox="-10 -10 20 20"><use href="#arrdn"/></svg></div>
    </section>

    <!-- Actions -->
    <section class="panel low actions">
      <div class="tabs">
        <div class="tab on w-act"><svg class="ic" viewBox="-10 -10 20 20"><use href="#act"/></svg><span>Actions</span><svg class="ic" viewBox="-10 -10 20 20"><use href="#x"/></svg></div>
        <div class="tab w-var"><svg class="ic" viewBox="-10 -10 20 20"><use href="#var"/></svg><span>Variables</span></div>
        <div class="tab"><svg class="ic" viewBox="-10 -10 20 20"><path d="M-7-5h3v10h-3M-1-5h7M0-2h7v3H0zM0 4h6" fill="none" stroke="#333" stroke-width="1.500"/><path d="M-3.500-7h4M-1.500-7V7" stroke="#b3261e" stroke-width="1.800"/></svg><span>Animation Timeline</span></div>
        <svg class="abtn" width="185" height="24" viewBox="1170 711 185 24"><use href="#actp" x="1181" y="722"/><path d="M1199 718l8 10M1207 718l-8 10" stroke="#c0211b" stroke-width="2.300"/><use href="#sp" x="1216.500" y="722"/><use href="#noeye" x="1232" y="722.500"/><rect x="1243.500" y="712" width="21" height="20" fill="#a9d2f2"/><use href="#flow" x="1254" y="722"/><use href="#winp" x="1275" y="722.500"/><use href="#dots" x="1297" y="722.500"/><use href="#min" x="1318" y="720"/><use href="#max" x="1340" y="722.500"/></svg>
      </div>
      <div class="aname">OnDelay_control (Control)</div>
      <div class="afilter"><label>Event Filter:</label><div class="inp"><svg class="ic" viewBox="-10 -10 20 20"><use href="#find"/></svg></div></div>
      <table class="atable">
        <thead><tr><th>Trigger Event<svg width="12" height="6" viewBox="0 0 12 6"><path d="M2 1l4 4 4-4" fill="none" stroke="#888"/></svg></th><th>Action</th><th>Model Element</th><th></th></tr></thead>
        <tbody>
          <tr class="sel"><td><svg class="ic" viewBox="-10 -10 20 20"><use href="#ctl"/></svg>gre.touch</td><td>Lua: num_keypad_init()</td><td>OnDelay_control</td><td></td></tr>
          <tr><td><svg class="ic" viewBox="-10 -10 20 20"><use href="#ctl"/></svg>gre.release</td><td>Data Change</td><td>OnDelay_control</td><td></td></tr>
          <tr><td><svg class="ic" viewBox="-10 -10 20 20"><use href="#ctl"/></svg>gre.press</td><td>Data Change</td><td>OnDelay_control</td><td></td></tr>
          <tr><td><svg class="ic" viewBox="-10 -10 20 20"><use href="#ctl"/></svg>gre.outbound</td><td>Data Change</td><td>OnDelay_control</td><td></td></tr>
          <tr class="rest"><td></td><td></td><td></td><td></td></tr>
        </tbody>
      </table>
    </section>

    <!-- Console -->
    <section class="panel low console">
      <div class="tabs">
        <div class="tab on w-con"><svg class="ic" viewBox="-10 -10 20 20"><path d="M-6-6.500H6V4H-6z" fill="#eef4fb" stroke="#3f6da8" stroke-width="1.800"/><path d="M-3.500-3.500h5M-3.500-1h7M-4 7h8" stroke="#3f6da8" stroke-width="1.400"/></svg><span>Console</span></div>
        <svg class="pbtn" width="28" height="20" viewBox="-12 -12 28 20"><use href="#max"/></svg>
      </div>
      <div class="aname">No consoles</div>
    </section>
  </div>

  <div class="status"><div class="heap">750M of 1481M</div><svg width="24" height="22" viewBox="0 0 24 22"><rect x="4" y="4" width="9" height="13" rx="2" fill="#d7e6f7" stroke="#5f8fc7"/><path d="M6.500 6v9M8.500 6v9M10.500 6v9" stroke="#5f8fc7"/></svg></div>
</div>

<!-- Remote taskbar -->
<div class="task in">
  <svg width="57" height="47" viewBox="59 993 57 47"><path d="M78 1010.500l7.500-1.200v7H78zM86.500 1009.100l10-1.600v8.800h-10zM78 1017.300h7.500v7l-7.500-1.200zM86.500 1017.300h10v8.900l-10-1.600z" fill="#111"/></svg>
  <div class="search"><svg width="46" height="45" viewBox="117 994 46 45" fill="none" stroke="#222" stroke-width="1.500"><circle cx="141.500" cy="1013" r="6.500"/><path d="M137 1018l-7.500 8.500"/></svg><span>Type here to search</span>
    <svg width="90" height="45" viewBox="428 994 90 45"><circle cx="445" cy="1013" r="11.500" fill="#ded7e8"/><path d="M437 1006q5 8 0 15M441 1002l13 20" stroke="#d0405a" stroke-width="1.500" fill="none" stroke-dasharray="2 1"/><path d="M473 999l2 4 4 2-4 2-2 4-2-4-4-2 4-2z" fill="#d65fd0"/><path d="M461 1013l12 6M458 1017l12 10M457 1022l6 7" stroke="#a5a0f0" stroke-width="1.800"/><circle cx="435" cy="1031" r="2.500" fill="#f2a81d"/><circle cx="509" cy="1012" r="2" fill="#5fd0e0"/><path d="M478 1013q1-5 5-5l2-6q2-3 6-1 2-2 5-.5 4-1.500 5 2 4 1 4 6l2 9 1 9q0 6-8 6.500-12 1-16-3-6-6-6-17z" fill="#c98526"/><path d="M486 1003q8-4 16 1l1 11q-8-3-14 2z" fill="#f3dfb2"/><path d="M488 1002l3 14M493 1001l2 14M498 1001l1 13M486 1007l17-1M487 1012l16-2" stroke="#a3671a" stroke-width="1.500" fill="none"/><path d="M481 1014q9 4 9 12M492 1034q-1-12 5-14 4 0 4 12" stroke="#7a440f" stroke-width="1.700" fill="none"/></svg>
  </div>
  <svg width="1342" height="47" viewBox="518 993 1342 47">
    <path d="M752 993h57v47h-57z" fill="#e2eff6"/><path d="M809 993h59v47h-59z" fill="#d6e6ef"/><path d="M868 993h57v47h-57z" fill="#f1f7f7"/><path d="M698 1037h48v3h-48zM868 1037h57v3h-57z" fill="#0a72c4"/>
    <circle cx="547" cy="1016.500" r="7.700" fill="none" stroke="#111" stroke-width="2.700"/>
    <g color="#111"><use href="#tv" x="602" y="1016.500"/></g>
    <use href="#edge" transform="translate(663 1016.500) scale(1.230)"/><use href="#fld" transform="translate(721 1016) scale(1.250)"/>
    <rect x="765.500" y="1002.500" width="28" height="28" fill="#1023ee" stroke="#0a149c"/><text class="gj" x="776" y="1014">J</text><text class="gj" x="767.500" y="1028.500">Link</text>
    <use href="#chr" transform="translate(838 1016) scale(1.170)"/><use href="#crank" transform="translate(896 1016.500) scale(1.550)"/>
    <circle cx="1279.500" cy="1017" r="11.500" fill="#1f8fc9" stroke="#fff" stroke-width="2"/><text class="gq" x="1274" y="1024">?</text><circle cx="1288.500" cy="1023" r="5.500" fill="#d8202a"/><path d="M1288.500 1019.500v4M1288.500 1025v1.500" stroke="#fff" stroke-width="1.600"/>
    <circle cx="1353" cy="1016" r="11" fill="url(#sung)"/><path d="M1350 1024a4.500 4.500 0 0 1 2-8 6 6 0 0 1 10 1 4 4 0 0 1 2 7z" fill="#dfe8f6"/><circle cx="1364" cy="1026.500" r="4" fill="#d8173a"/>
    <text class="gw" x="1377" y="1024">99°F</text><text class="gw" x="1420" y="1024">Mostly sunny</text>
    <g color="#111" fill="none" stroke="#111"><path d="M1544.500 1020l7-7 7 7" stroke-width="1.300"/><use href="#wifi" x="1665" y="1017" /><use href="#mute" x="1700" y="1016"/><use href="#bat" x="1590" y="1016"/><rect x="1621.500" y="1012" width="8" height="10" rx="1" stroke-width="1.200"/><path d="M1630 1016l4-2.500v7l-4-2.500M1622.500 1008.500q5-2 9 0M1622.500 1025.500q5 2 9 0" stroke-width="1.200"/></g>
    <text class="gt" x="1760" y="1010.500">3:53 PM</text><text class="gt" x="1760" y="1032">8/17/2022</text>
    <g color="#0b0b0b"><use href="#note1" x="1822" y="1015"/></g><path d="M1816 1011.500h12M1816 1015h12" stroke="#fff" stroke-width="1.300"/><circle cx="1831.500" cy="1025.500" r="9" fill="#d3d7e0" stroke="#777"/><text class="gt gb" x="1831.500" y="1030.500">1</text>
    <path d="M1856.500 993v47" stroke="#b6bfce"/>
  </svg>
</div>
</main>

<!-- Local taskbar -->
<footer class="task out">
  <svg width="48" height="40" viewBox="0 1040 48 40"><path d="M16 1054.300l6.500-1v6.200H16zM23.300 1053.200l8.700-1.300v7.600h-8.700zM16 1060.400h6.500v6.200l-6.500-1zM23.300 1060.400h8.700v7.600l-8.700-1.300z" fill="#fff"/></svg>
  <div class="search"><svg width="40" height="38" viewBox="49 1041 40 38" fill="none" stroke="#eee" stroke-width="1.300"><circle cx="70.500" cy="1057.500" r="5"/><path d="M67 1061.500l-6.500 6.500"/></svg><span>Type here to search</span></div>
  <svg width="1529" height="40" viewBox="391 1040 1529 40">
    <path d="M785 1040h49v40h-49z" fill="#4b4542"/><path d="M447 1078h40v2h-40zM643 1078h40v2h-40zM692 1078h40v2h-40zM741 1078h40v2h-40zM785 1078h49v2h-49z" fill="#b9b1aa"/>
    <g color="#fff"><use href="#tv" transform="translate(415 1059.500) scale(.9)"/></g>
    <use href="#chr" x="467" y="1060"/><use href="#edge" transform="translate(516 1060) scale(1.080)"/><use href="#fld" transform="translate(564.500 1060)"/>
    <path d="M602 1057l12-9 12 9z" fill="#0d5aa7"/><path d="M604 1056h20v10h-20z" fill="#fff"/><path d="M602 1057l12 9 12-9v14h-24z" fill="#2f9fe8"/><path d="M602 1071l12-9 12 9z" fill="#55c4f5"/>
    <path d="M668 1049l5 2.500v17l-5 2.500-13-11z" fill="#2aa3ee"/><path d="M668 1054v12l-8-6z" fill="#463c36"/><path d="M651 1055.500l2-1.500 15 12.500v4.500zM651 1064.500l2 1.500 15-12v-5z" fill="#1683d2"/>
    <circle cx="712" cy="1060" r="11" fill="#6f2c9b"/><circle cx="712" cy="1060" r="8" fill="#fff"/><path d="M707 1055l2.500 1.500h5L717 1055v3q2 4-1.500 6l-2 .5v5h-3v-5l-2-.5q-3.500-2-1.500-6z" fill="#6f2c9b"/>
    <path d="M759.500 1049h3l5.500 17h-14z" fill="#f07f13"/><path d="M757.800 1054.500h6.400l1.200 3.500h-8.800zM755.500 1061h11l.8 3h-12.600z" fill="#eee"/><path d="M753 1065h16l2 6h-20z" fill="#ef7b0e"/>
    <rect x="804" y="1051" width="15" height="14" fill="#ccc" stroke="#777"/><rect x="799.500" y="1055" width="16" height="15" fill="#f3f3f3" stroke="#777"/><use href="#chr" transform="translate(808 1064.500) scale(.45)"/>
    <g color="#fff" fill="none" stroke="#fff"><path d="M1677.500 1063l5.500-5.500 5.500 5.500" stroke-width="1.200"/><use href="#bat" transform="translate(1707 1060) scale(.85)"/><use href="#wifi" transform="translate(1733 1061) scale(.85)"/><use href="#mute" transform="translate(1754 1060) scale(.9)"/></g>
    <text class="go" x="1784.500" y="1064.500">ENG</text><text class="go" x="1835" y="1055">3:53 PM</text><text class="go" x="1835" y="1073">8/17/2022</text>
    <g color="#fff"><use href="#note1" transform="translate(1887 1059) scale(.85)"/></g><path d="M1882 1056h10M1882 1059.500h10" stroke="#453b35" stroke-width="1.200"/><circle cx="1895" cy="1067.500" r="7.500" fill="#3b3632" stroke="#999"/><text class="go" x="1895" y="1072">1</text>
    <path d="M1915.500 1040v40" stroke="#8a827c"/>
  </svg>
</footer>

<!-- Windows Update toast -->
<aside class="toast">
  <div class="th"><svg width="20" height="22" viewBox="0 0 20 22" fill="none" stroke="#111" stroke-width="1.300"><path d="M1 4l17-3v19L1 17.500z"/><path d="M6 10a4 4 0 0 1 7-2.500M13 5v3h-3M13 12a4 4 0 0 1-7 2.500M6 17v-3h3"/></svg><span>Windows Update</span><svg width="14" height="14" viewBox="0 0 14 14"><path d="M1.500 1.500l11 11M12.500 1.500l-11 11" stroke="#777" stroke-width="1.200"/></svg></div>
  <strong>Restart to install the latest Windows updates</strong>
  <p>New updates are ready for your device. Leave it<br>on and plugged in, and we'll try to restart outside<br>of your active hours. Or, pick a time that works for<br>you.</p>
  <div class="acts">
    <div><svg width="24" height="24" viewBox="-12 -12 24 24"><path d="M-4-6.500a8 8 0 1 0 8 0M0-9.500V0"/></svg>Restart now</div>
    <div><svg width="24" height="24" viewBox="-12 -12 24 24"><path d="M0 6.500h-8.500v-14H6.500v6M-8.500-4H6.500M-5-9.500v3M3-9.500v3"/><circle cx="4.500" cy="4" r="4.700"/><path d="M4.500 1.500V4.500H7"/></svg>Pick a time</div>
    <div><svg width="24" height="24" viewBox="-12 -12 24 24"><circle r="7.500"/><path d="M0-4V1H4M-9-4a3.500 3.500 0 0 1 5-5M9-4a3.500 3.500 0 0 0-5-5M-5.500 6L-8 9M5.500 6L8 9"/></svg>Snooze</div>
  </div>
</aside>

<svg class="bubble" width="50" height="110" viewBox="1870 477 50 110"><circle cx="1931" cy="532" r="39" fill="#b2b2b2"/><path d="M1924 518.500L1912 532l12 13.500" fill="none" stroke="#555" stroke-width="3.500"/></svg>

<!-- Pen marks -->
<svg class="pen" width="1920" height="1080" viewBox="0 0 1920 1080"><path d="M156 309.500C170 311.500 195 312 200 311S206 309 206.500 308.500M160 554.500C170 551 180 551.500 192 549S205 548.500 213.500 548.500M1415.500 220v2.500C1435 220.500 1448 223.500 1465 224H1516"/></svg>
</body>
</html>
```

FILE: styles.css
```css
* { box-sizing: border-box; }
body { margin: 0; width: 1920px; height: 1080px; overflow: hidden; background: #808080; font: 13.5px/18px "Open Sans", "Noto Sans", sans-serif; letter-spacing: -.14px; color: #1c1c1c; display: flex; flex-direction: column; position: relative; }
ul { list-style: none; margin: 0; padding: 0; }
svg { display: block; flex: none; }
.sprite { position: absolute; width: 0; height: 0; }
.ic { width: 20px; height: 20px; }
.g { color: #7fae5c; }

/* glyph lettering */
.ga { font: bold 12px "Open Sans", sans-serif; fill: #222; }
.ge { font: bold 15px "Open Sans", sans-serif; fill: #222; }
.gstr { font: bold 8px "Open Sans", sans-serif; fill: #6aa336; letter-spacing: 0; }
.g010 { font: bold 7px "Liberation Sans", sans-serif; fill: #1d4a80; letter-spacing: 0; }
.gps { font: bold 9px "Open Sans", sans-serif; fill: #2fa3f7; }
.gsb { font: bold 9.500px "Open Sans", sans-serif; fill: #5a9b2c; letter-spacing: -1px; }
.gtt { font: bold 17px "Liberation Serif", serif; fill: #333; }
.gtt2 { font: 12px "Liberation Serif", serif; fill: #333; }
.gsm { font: bold 10px "Open Sans", sans-serif; fill: #777; letter-spacing: 0; }
.gj { font: bold 12px "Open Sans", sans-serif; fill: #fff; }
.gq { font: bold 19px "Open Sans", sans-serif; fill: #fff; }
.gw { font: 16.500px "Open Sans", sans-serif; fill: #222; letter-spacing: -.3px; }
.gt { font: 13.300px "Open Sans", sans-serif; fill: #222; text-anchor: middle; stroke: none; letter-spacing: -.35px; }
.gb { font-size: 14px; fill: #111; }
.go { font: 11.500px "Open Sans", sans-serif; fill: #fff; text-anchor: middle; stroke: none; letter-spacing: -.4px; }

.crd-bar { height: 26px; background: #202124; color: #eceef0; font-size: 12px; line-height: 26px; padding-left: 11px; display: flex; justify-content: space-between; letter-spacing: -.27px; }
.remote { width: 1802px; height: 1014px; margin-left: 59px; display: flex; flex-direction: column; box-shadow: 0 0 14px rgba(0,0,0,.45); }
.win { height: 967px; background: #f0f0f0; display: flex; flex-direction: column; }
.title { height: 26px; background: #fdfffd; display: flex; align-items: center; font-size: 13.500px; letter-spacing: -.08px; }
.title .ic { margin: 0 4px 0 1px; }
.title > svg:last-child { margin-left: auto; margin-right: 10px; }
.menu { height: 23px; background: #fff; display: flex; padding: 4px 0 0 7px; gap: 12.900px; letter-spacing: .06px; }
.toolbar { height: 28px; color: #111; }

.bench { display: grid; grid-template-columns: 359px 932px 501px; grid-template-rows: 603px 257px; column-gap: 5px; row-gap: 4px; margin-top: 1px; }
.panel { overflow: hidden; background: #f0f0f0; display: flex; flex-direction: column; box-shadow: inset 0 0 0 1px #dcdcdc; }
.tabs { height: 27px; flex: none; background: #e6e6e6; border-top: 1px solid #d9d9d9; display: flex; }
.tab { display: flex; align-items: center; padding: 1px 2px 0; }
.tab span { margin-left: 1px; white-space: nowrap; letter-spacing: .04px; }
.tab.on { background: #f4f4f4; border-right: 1px solid #d9d9d9; padding-right: 0; }
.tab.on .ic:last-child { margin-left: auto; }
.model .tab.on, .props .tab.on { background: #fff; }
.low .tab.on { background: #f0f0f0; }
.pbtn { margin: -1px -2px 0 auto; }
.abtn { margin: -1px 0 0 auto; }
.w-app { width: 163px; } .w-gde { width: 203px; } .w-prop { width: 109px; } .w-notes { width: 84px; } .w-act { width: 93px; } .w-var { width: 83px; } .w-con { width: 100px; }
.editor .tab span { letter-spacing: -.2px; }
.model, .props { background: #fff; }

.inp { border: 1px solid #7d7d7d; background: #fff; display: flex; align-items: center; }
.strip { display: flex; justify-content: flex-end; padding-right: 6px; height: 20px; flex: none; }
.filter { display: flex; align-items: center; height: 26px; flex: none; padding-left: 1px; }
.filter label { width: 77px; }
.filter .inp { width: 223px; height: 24px; }
.filter .lk { margin-left: -1px; }
.vsb { width: 19px; flex: none; background: #f0f0f0; color: #555; display: flex; flex-direction: column; align-items: center; margin-left: auto; }
.vsb i { width: 18px; background: #cdcdcd; display: block; }
.vsb .ic:last-child { margin-top: auto; }
.treewrap { display: flex; height: 387px; flex: none; margin-top: 4px; border-bottom: 1px solid #bbb; padding: 0 1px 2px 0; }
.tree { width: 338px; overflow: hidden; }
.tree li { height: 21.6px; display: flex; align-items: center; justify-content: flex-end; gap: 4px; padding-right: 1px; }
.tree li.sel { background: #cce8ff; }
.tree .nm { margin-right: auto; width: 299px; display: flex; align-items: center; overflow: hidden; white-space: nowrap; height: 100%; }
.tree .nm:only-child { width: 337px; }
.nm span, .nm em { margin-left: 2px; letter-spacing: -.1px; }
.l0 { padding-left: 19px; } .l1 { padding-left: 38px; } .l2 { padding-left: 57px; } .l3 { padding-left: 95px; }
.tree b { width: 15px; height: 15px; background: #cbcbcb; position: relative; top: -.5px; }
.tree b svg { width: 15px; height: 15px; }
.th-tree { height: 154px; margin-top: 71px; }
.scripts { display: flex; align-items: center; height: 34px; flex: none; padding: 3px 1px 0; }
.scripts label { width: 49px; }
.scripts .inp { flex: 1; height: 25px; }
.filewrap { display: flex; flex: 1; overflow: hidden; padding: 2px 1px 1px 0; }
.files { padding: 0 0 0 5px; letter-spacing: -.03px; }
.files li { height: 22.500px; display: flex; align-items: center; white-space: nowrap; line-height: 22px; margin-left: -2px; }
.files li.sel { width: 170px; background: linear-gradient(90deg, transparent 2px, #d9d9d9 2px); }
.files .ic { width: 18px; }
.th-files { height: 20px; }

.edrow { display: flex; height: 548px; }
.edmain { width: 919px; display: grid; grid-template-columns: 900px 19px; grid-template-rows: 527px 21px; }
.canvas { width: 899px; height: 527px; background: #414141; display: flex; gap: 4px; position: relative; overflow: hidden; border-left: 1px solid #2c2c2c; font-family: Roboto, sans-serif; color: #c2c2c2; letter-spacing: .1px; }
.s1 { width: 725px; padding-left: 4px; background: #414141; }
.s2 { width: 169px; padding-left: 5px; background: #262626; flex: none; overflow: hidden; }
.screen { flex: none; }
.slabel { height: 18px; line-height: 20px; font-size: 10px; font-family: "Open Sans", sans-serif; white-space: nowrap; color: #ddd; letter-spacing: -.63px; padding-left: 2px; }
.s2 .slabel { background: #212221; margin-left: -5px; padding-left: 8px; letter-spacing: -.46px; }
.shead { height: 40px; border-top: 1px solid #202020; border-bottom: 1px solid #2b2b2b; background: #343434; border-right: 6px solid #18191a; }
.s2 .shead { border-right: 0; }
.sbody { height: 336px; display: flex; background: #18191a; }
.snav { width: 202px; background: #2c2e2d; font-size: 15px; letter-spacing: -.37px; }
.snav div { height: 52.300px; border-bottom: 2px solid #303030; background: #444545; display: flex; align-items: center; justify-content: space-between; padding: 4px 14px 0 17px; }
.snav .ic { fill: none; stroke: #d0d0d0; stroke-width: 2.500; margin-top: 5px; }
.spage { flex: 1; padding-left: 23px; }
.spage h3 { margin: 11px 0 0; font: 14.500px/19px Roboto, sans-serif; color: #e2e2e2; letter-spacing: -.37px; }
.card { width: 474px; height: 218px; margin-top: 35px; border-radius: 8px; background: #2c2e2e; overflow: hidden; }
.card h4 { margin: 0 0 26px; height: 40px; background: #373837; text-align: center; font: 500 14.800px/42px Roboto, sans-serif; color: #cfcfcf; padding-right: 1px; letter-spacing: -.4px; }
.setting { display: flex; justify-content: space-between; margin: 0 39px 29px 23px; align-items: center; font-size: 15px; height: 45px; letter-spacing: -.3px; }
.setting span { padding-top: 4px; }
.val { width: 113px; height: 45px; border-radius: 6px; background: #4c4d4d; padding: 10px 0 0 16px; display: flex; flex-direction: column; }
.val b { font: 19px/20px Roboto, sans-serif; color: #e0e0e0; }
.val small { font-size: 12.500px; line-height: 13px; padding-left: 1px; }
.sfoot { height: 46px; display: flex; background: #18191a; }
.sfoot i { width: 135px; background: #383838; margin-right: auto; }
.sfoot svg { background: #38393a; margin-left: 1px; }
.sfoot i + svg { background: #4c4d4e; }
.tlabel { height: 21px; margin-left: -4px; padding-left: 6px; font: 10px/26px "Open Sans", sans-serif; letter-spacing: -.65px; background: #404040; }
.tbody { height: 66px; background: #18191a; color: #fff; font-size: 20.500px; font-weight: 500; line-height: 26px; letter-spacing: .35px; }
.pick { position: absolute; left: 546px; top: 183px; }
.vcan { height: 527px; margin: 0; background: #f2f2f2; }
.th-can { height: 145px; margin-top: 244px; }
.hsb { grid-column: 1 / 3; display: flex; align-items: center; height: 21px; background: #f0f0f0; color: #555; }
.hsb i { width: 529px; height: 17px; background: #cbcbcb; }
.hsb .ic:last-child { margin-left: auto; margin-right: 20px; }
.palette { width: 12px; background: #e2e2e2; border-left: 1px solid #999; }
.palette svg { background: #fff; border-bottom: 1px solid #aaa; }
.master { height: 25px; width: 930px; margin-left: 1px; background: #dfe1e0; border: 1px solid #b6b6b6; display: flex; align-items: center; justify-content: center; gap: 1px; padding-right: 2px; letter-spacing: -.08px; }

.ptitle { height: 31px; flex: none; border-bottom: 1px solid #b0b0b0; font-weight: 700; font-size: 13px; padding: 4px 3px; }
.pwrap { display: flex; flex: 1; padding-right: 1px; overflow: hidden; }
.form { width: 479px; padding-left: 4px; overflow: hidden; letter-spacing: -.1px; }
.pwrap .vsb { padding-top: 5px; margin-right: 1px; }
.th-prop { height: 478px; }
.r { display: grid; align-items: center; align-content: start; white-space: nowrap; }
.r label { padding-left: 5px; }
.r .inp { height: 100%; padding-left: 6px; }
.r .inp.c { justify-content: center; padding: 0 0 0 4px; }
.form h2 { width: 471px; height: 25px; margin: 0; background: #333; color: #f2f2f2; font: 600 13.600px/25px "Open Sans", sans-serif; padding-left: 5px; letter-spacing: .12px; }
.form h2::before { content: ""; display: inline-block; border: 4px solid transparent; border-top: 7px solid #f2f2f2; border-bottom: 0; margin: 0 5px 3px 0; }
.form h2.m6 { margin-top: 6px; } .form h2.m7 { margin-top: 9px; } .form h2.m11 { margin-top: 11px; }
.spin { border: 1px solid #7d7d7d; height: 100%; display: flex; align-items: center; justify-content: space-between; padding-left: 6px; background: #fff; }
.spin i { width: 27px; align-self: stretch; background: #e4e4e4; border-left: 1px solid #7d7d7d; margin: -1px -1px -1px auto; border-top: 1px solid #ddd; border-bottom: 1px solid #ccc; border-right: 1px solid #ccc; display: flex; align-items: center; justify-content: space-evenly; }
.spin i::before, .spin i::after { content: ""; border: 4.500px solid transparent; border-top: 7px solid #555; border-bottom: 0; }
.spin i::after { border-top: 0; border-bottom: 7px solid #555; }
.r .combo { justify-content: space-between; padding-left: 4px; }
.combo svg { fill: none; stroke: #666; stroke-width: 1.300; }
.combo.gray svg { background: #e4e4e4; }
.r-text { grid-template: 23px 30px / 45px 409px 20px; padding-top: 10px; }
.r-text label, .r-alpha label { padding-left: 1px; }
.r-text label { grid-row: 1 / 3; padding-bottom: 6px; }
.r-text .g:last-child { grid-column: 2; padding-left: 7px; }
.r-alpha { grid-template: 25px / 45px 409px 20px; margin-top: 2px; }
.r-font { grid-template: 25px 30px / 47px 381px 23px 20px; margin-top: 9px; }
.r-font label { grid-row: 1 / 3; padding-bottom: 5px; }
.r-font .ic { justify-self: end; }
.r-font .ic + .ic { margin-right: 3px; }
.r-font .g:last-child { grid-column: 2; padding-left: 8px; }
.r-color { grid-template: 25px / 46px 38px 24px 61px 24px 38px 18px 38px 17px 38px 110px 20px; margin-top: 1px; }
.r-color span, .r-color em { text-align: center; padding-left: 4px; }
.r-color .swatch { height: 14px; background: #e6e6e6; border: 1px solid #333; }
.r-color .ic { justify-self: end; margin-right: 1px; }
.r-color .ic:last-child { margin-right: 2px; }
.r-size { grid-template: 26px / 30px 86px 23px 20px 49px 86px 23px 47px 86px 20px; margin-top: 5px; }
.r-size .ic:first-child { margin-left: 6px; }
.r-size .ic:nth-child(3) { margin-left: 3px; }
.r-size .ic:nth-child(4) { margin-left: -1px; }
.r-size .ic:nth-child(5) { margin-left: 24px; }
.r-size .ic:nth-child(8) { margin-left: 21px; }
.r-over { grid-template: 26px / 66px 197px 47px 19px 121px 20px; margin-top: 6px; }
.cb { width: 15px; height: 15px; border: 1px solid #333; background: #fff; }
.r-ext { grid-template: 20px / 7px 19px 237px 20px; margin-top: 6px; }
.r-ext .cb { grid-column: 2; }
.r-align { grid-template: 26px / 64px 64px 64px 45px 64px 64px 65px 20px; column-gap: 2px; padding-left: 8px; margin-top: 10px; color: #333; }
.r-align > .ic { margin-left: -1px; }
.r-align button { height: 26px; padding: 0; border: 1px solid #b5b5b5; background: #e0e0e0; display: grid; place-items: center; color: inherit; }
.r-align button.on { background: #cce4f7; border-color: #1d5a8c; }
.r-angle { grid-template: 26px / 47px 403px 20px; margin-top: 9px; }
.r-xy { grid-template: 26px / 27px 176px 50px 20px 181px 20px; margin-top: 4px; }
.r-wh { margin-top: 5px; }
.r-xy label { padding-left: 4px; }
.r-xy label:nth-of-type(2) { padding-left: 0; }

.notes { background: #f0f0f0; }
.ctxname { height: 22px; padding: 2px 1px 0; border-bottom: 1px solid #a5a5a5; flex: none; }
.nfilter { display: flex; align-items: center; padding: 5px 5px 5px 6px; height: 34px; flex: none; }
.nfilter label { width: 38px; }
.nfilter .inp { flex: 1; height: 24px; }
.ntable { margin: 0 5px 0 6px; height: 53px; border: 1px solid #8a8a8a; background: linear-gradient(#fff 50%, transparent 50%), #fafafa; display: grid; grid-template-columns: 115px 115px 1fr; flex: none; }
.ntable div { padding: 4px 0 0 6px; border-right: 1px solid #e4e4e4; position: relative; letter-spacing: 0; }
.ntable div:last-child { border: 0; }
.ntable svg { position: absolute; left: 53px; top: 0; }
.ntype { display: flex; align-items: center; height: 25px; margin: 13px 5px 0 6px; flex: none; }
.ntype label { width: 36px; }
.dis { flex: 1; height: 25px; border: 2px solid #dcdcdc; display: flex; justify-content: flex-end; }
.dis svg { background: #f8f8f8; }
.narea { margin: 5px 5px 0 6px; height: 53px; border: 1px solid #ccc; display: flex; flex-direction: column; justify-content: space-between; align-items: flex-end; padding: 1px; color: #bbb; }

.aname { height: 19px; line-height: 21px; flex: none; border-bottom: 1px solid #bdbdbd; letter-spacing: 0; }
.afilter { display: flex; align-items: center; height: 36px; padding-left: 5px; flex: none; margin-top: 1px; }
.afilter label { width: 76px; }
.afilter .inp { width: 846px; height: 24px; background: #f0f0f0; }
.atable { border-collapse: collapse; table-layout: fixed; width: 921px; margin: -1px 0 0 5px; }
.atable th, .atable td { padding: 0 0 0 6px; text-align: left; font-weight: 400; height: 22.800px; border-right: 1px solid #e4e4e4; }
.atable td { padding-top: 2px; }
.atable th { width: 301px; background: #fff; height: 24px; position: relative; padding-top: 1px; }
.atable th:first-child { width: 299px; padding-left: 5px; } .atable th:last-child { width: 20px; border: 0; }
.atable th svg { position: absolute; left: 144px; top: 1px; }
.atable td:last-child { border: 0; }
.atable td:first-child { background: #fff; padding-left: 0; }
.atable td .ic { display: inline-block; vertical-align: middle; margin: -4px 1px 0 0; }
.atable tr.sel td { background: #cbcbcb; } .atable tr.sel td:first-child { background: #d9d9d9; } .atable tr.sel td:last-child { background: none; }
.atable tr.rest td { height: 55px; }

.status { height: 24px; display: flex; padding: 2px 0 0 1305px; }
.heap { width: 145px; height: 21px; margin-right: 0; background: linear-gradient(90deg, #9f9f9f 74px, #f7f7f7 74px); text-align: center; line-height: 20px; padding-left: 4px; font-size: 13.500px; letter-spacing: -.05px; border-right: 1px solid #999; }

.task { display: flex; }
.task.in { height: 47px; background: linear-gradient(90deg, #cfe5ed, #d2e3ed 50%, #d7deef); }
.task.in .search { width: 402px; height: 46px; background: #fff; border: 1px solid #bfc8cc; display: flex; align-items: center; font-size: 16.700px; letter-spacing: .08px; color: #3c3c3c; padding-bottom: 0; }
.task.in .search span { margin-left: -1px; }
.task.in .search svg:last-child { margin-left: auto; }
.task.out { height: 40px; width: 1920px; background: linear-gradient(90deg, #4a3f35, #443c38 50%, #42372e); }
.task.out .search { width: 343px; height: 40px; background: #424242; border: 1px solid #6b6b6b; display: flex; align-items: center; color: #d8d8d8; font-size: 14px; letter-spacing: -.1px; }

.toast { position: absolute; left: 1415px; top: 680px; width: 427px; height: 300px; background: #e4e4e4; color: #111; padding: 20px 0 0 19px; }
.th { display: flex; align-items: center; height: 24px; }
.th span { margin-left: 8px; margin-right: auto; letter-spacing: 0; }
.th svg:last-child { margin-right: 26px; }
.toast strong { display: block; margin-top: 17px; font: 600 16.500px/23px "Open Sans", sans-serif; color: #000; letter-spacing: 0; white-space: nowrap; }
.toast p { margin: 0; font-size: 16.600px; line-height: 23.600px; color: #6a6a6a; letter-spacing: .03px; white-space: nowrap; }
.acts { display: grid; grid-template-columns: 130px 130px 130px; margin: 34px 0 0 -1px; text-align: center; letter-spacing: -.18px; }
.acts svg { margin: 0 auto 14px; fill: none; stroke: #111; stroke-width: 1.400; }
.bubble { position: absolute; left: 1870px; top: 477px; filter: drop-shadow(-1px 4px 5px rgba(0,0,0,.3)); }
.pen { position: absolute; left: 0; top: 0; pointer-events: none; fill: none; stroke: #ed1c24; stroke-width: 4; stroke-linecap: round; stroke-linejoin: round; }
```
